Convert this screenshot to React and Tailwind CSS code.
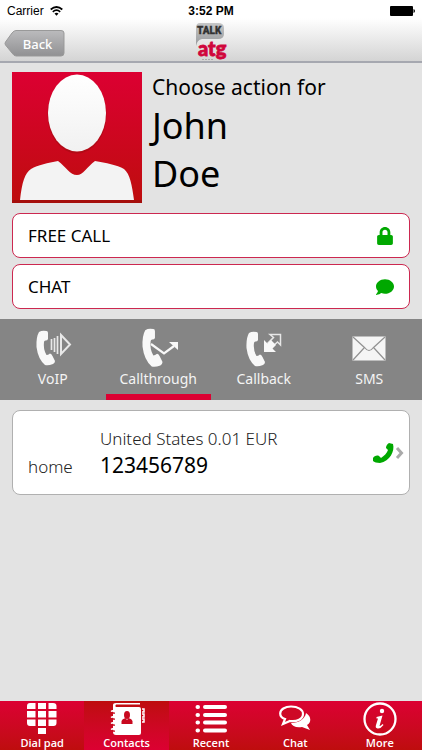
import React from 'react';
import { FaComment, FaLock } from 'react-icons/fa';

const Handset = () => (
  <path
    d="M3 2Q6 0 10.500 1Q12 1 12 3V9Q11.500 10.500 9.500 10.500Q8 10.500 8 12Q7 19 10.500 25Q12 25 14 23.500Q15.500 23.500 16.500 26L19 31Q19 33 17 34Q12 36 9 35Q2 29 .5 17Q0 7 3 2Z"
    fill="#f8f8f8"
  />
);

function VoipIcon() {
  return (
    <svg width="38" height="37" viewBox="-2 0 38 37" aria-hidden="true">
      <Handset />
      <path d="M15.500 9V20M18.500 8V22M21.500 6V24" stroke="#e8e8e8" strokeWidth="1.700" />
      <path d="M25 5L34 14.500L25 24Z" fill="none" stroke="#e8e8e8" strokeWidth="2" />
    </svg>
  );
}

function CallthroughIcon() {
  return (
    <svg width="42" height="40" viewBox="-5 0 42 40" aria-hidden="true">
      <g transform="scale(1.08 1.1)"><Handset /></g>
      <path d="M9 16L22 25.500L32 18" fill="none" stroke="#f8f8f8" strokeWidth="2.200" />
      <path d="M27 14H36V22Z" fill="#f8f8f8" />
    </svg>
  );
}

function CallbackIcon() {
  return (
    <svg width="36" height="40" viewBox="0 0 36 40" aria-hidden="true">
      <g transform="translate(0 3)"><Handset /></g>
      <path d="M24 6.500H34.500V17L31.500 14L26 19L22 15L27.500 9.500Z" fill="#858585" stroke="#e8e8e8" strokeWidth="1.500" />
      <path d="M18 12V24H30L26.500 20.500L30 17L25 12L21.500 15.500Z" fill="#f8f8f8" />
    </svg>
  );
}

function SmsIcon() {
  return (
    <svg width="34" height="26" viewBox="0 0 34 26" aria-hidden="true">
      <rect x=".5" y="1.500" width="33" height="24" fill="#f5f5f5" />
      <path d="M1 2L13 13Q17 18 21 13L33 2M1 25L12 13M33 25L22 13" fill="none" stroke="#929292" strokeWidth="1.200" />
    </svg>
  );
}

function DialPadIcon() {
  return (
    <svg width="30" height="34" viewBox="0 0 30 34" fill="#fff" aria-hidden="true">
      <path d="M3 1H8.500V7H0V4Q0 1 3 1ZM11 1H19V7H11ZM21.500 1H26Q29.500 1 29.500 4V7H21.500Z" />
      <path d="M0 9H8.500V15.500H0ZM11 9H19V15.500H11ZM21.500 9H29.500V15.500H21.500Z" />
      <path d="M0 17.500H8.500V24H3Q0 24 0 21ZM11 17.500H19V24H11ZM21.500 17.500H29.500V21Q29.500 24 26.500 24H21.500ZM11 26H19V32H11Z" />
    </svg>
  );
}

function ContactsIcon() {
  return (
    <svg width="38" height="34" viewBox="-2 0 38 34" aria-hidden="true">
      <path d="M3 3Q3 1 6 1H30V2.500H6Q4.500 4 6 5H29Q31 5 31 7V31Q31 33 29 33H6Q3 33 3 30Z" fill="#fff" />
      <path d="M32 7H34V10H32M32 12H34V15H32M32 17H34V20H32" fill="none" stroke="#fff" strokeWidth="1.500" />
      <path d="M2 11H5M2 17H5M2 23H5M2 29H5" stroke="#c60a1c" strokeWidth="1.500" />
      <path d="M1 9.500Q3 8 5 10M1 15.500Q3 14 5 16M1 21.500Q3 20 5 22M1 27.500Q3 26 5 28" fill="none" stroke="#fff" strokeWidth="1.500" />
      <ellipse cx="17" cy="13" rx="3" ry="4" fill="#c8091f" />
      <path d="M11.500 22V19Q12 17 15.500 16L17 18L18.500 16Q22 17 22.500 19V22Z" fill="#c8091f" />
    </svg>
  );
}

function RecentIcon() {
  return (
    <svg width="32" height="30" viewBox="0 0 32 30" stroke="#fff" strokeWidth="4" strokeLinecap="round" aria-hidden="true">
      <path d="M2.500 3H3M2.500 11H3M2.500 18.500H3M2.500 26.500H3M10 3H30M10 11H30M10 18.500H30M10 26.500H30" />
    </svg>
  );
}

function ChatIcon() {
  return (
    <svg width="32" height="28" viewBox="0 0 32 28" aria-hidden="true">
      <path d="M27 8C32 11 33 17 28 20L31 25L23 22C17 23 13 21 12 18C20 18 26 14 27 8Z" fill="#fff" />
      <path d="M12 1.500C19 1.500 24 4.500 24 9C24 14 18 17 11 16L4 19L6 14C3 13 1.200 11 1.200 8.500C1.200 4.500 6 1.500 12 1.500Z" fill="#ce0826" stroke="#fff" strokeWidth="2.200" />
    </svg>
  );
}

function MoreIcon() {
  return (
    <svg width="34" height="34" viewBox="0 0 34 34" aria-hidden="true">
      <circle cx="17" cy="17" r="15.500" fill="none" stroke="#fff" strokeWidth="2.300" />
      <circle cx="19" cy="9" r="2.200" fill="#fff" />
      <path d="M13.500 15L19.500 13.500L16.500 24Q17.500 24.500 19.500 22L20.500 23Q17.500 27 14.500 26.500Q12 26 13 23L15 16.500H13.500Z" fill="#fff" />
    </svg>
  );
}

function Logo() {
  return (
    <svg width="36" height="40" viewBox="0 0 36 40" role="img" aria-label="Talk atg">
      <defs>
        <linearGradient id="bubble" x1="0" y1="0" x2="0" y2="1">
          <stop offset="0" stopColor="#c6c7c8" />
          <stop offset="1" stopColor="#97999b" />
        </linearGradient>
      </defs>
      <path d="M7 1H25Q31 1 31 6V12Q31 17 25 17H9Q4 18 3 24V6Q3 1 7 1Z" fill="url(#bubble)" />
      <text x="4" y="12" fill="#333" stroke="#333" strokeWidth=".3" fontFamily="Roboto, sans-serif" fontSize="10" fontWeight="900">TALK</text>
      <text x="5" y="34" fill="#d0063c" stroke="#d0063c" strokeWidth=".8" fontFamily="Lato, sans-serif" fontSize="20" fontWeight="900">atg</text>
      <path d="M9 37.500H20" stroke="#aaa" strokeDasharray="2 1" />
    </svg>
  );
}

function Avatar() {
  return (
    <svg className="shrink-0" width="130" height="131" viewBox="0 0 130 131" role="img" aria-label="Contact photo">
      <defs>
        <linearGradient id="avatarBg" x1="0" y1="0" x2="0" y2="1">
          <stop offset="0" stopColor="#dc0032" />
          <stop offset="1" stopColor="#be0d0d" />
        </linearGradient>
        <linearGradient id="avatarFg" x1="0" y1="0" x2="0" y2="1">
          <stop offset="0" stopColor="#fff" />
          <stop offset="1" stopColor="#f1f1f1" />
        </linearGradient>
      </defs>
      <path d="M0 0H130V131H0Z" fill="url(#avatarBg)" />
      <path d="M0 128H130V131H0Z" fill="#a50e0c" />
      <ellipse cx="65" cy="42.500" rx="29.500" ry="39" fill="#9c0c10" opacity=".5" />
      <ellipse cx="65" cy="41" rx="29" ry="38.500" fill="url(#avatarFg)" />
      <path d="M8 128C10 110 13 101 19 97C26 93 36 91 46 89C54 95 58 103 65 103C71 103 75 95 83 89C94 91 105 93 112 97C118 102 120 113 122 128Z" fill="#f3f3f3" />
    </svg>
  );
}

const quickActions = [
  { label: 'FREE CALL', Icon: FaLock },
  { label: 'CHAT', Icon: FaComment },
];

const callModes = [
  { label: 'VoIP', Icon: VoipIcon },
  { label: 'Callthrough', Icon: CallthroughIcon },
  { label: 'Callback', Icon: CallbackIcon },
  { label: 'SMS', Icon: SmsIcon },
];

const navItems = [
  { label: 'Dial pad', Icon: DialPadIcon },
  { label: 'Contacts', Icon: ContactsIcon },
  { label: 'Recent', Icon: RecentIcon },
  { label: 'Chat', Icon: ChatIcon },
  { label: 'More', Icon: MoreIcon },
];

function Header() {
  return (
    <header className="border-b-2 border-[#a6a8b0] bg-linear-to-b from-white from-30% to-[#d4d4d4]">
      <div className="grid h-[22px] grid-cols-3 items-center px-[7px] font-['Liberation_Sans',sans-serif] text-xs text-black">
        <div className="flex items-center gap-1.5">
          Carrier
          <svg width="13" height="10" viewBox="0 0 13 10" fill="none" stroke="#000" strokeWidth="1.700" aria-hidden="true">
            <path d="M.7 3.500Q6.500 -1.500 12.300 3.500M2.800 5.800Q6.500 2.500 10.200 5.800" />
            <path d="M4.500 7.500Q6.500 6 8.500 7.500L6.500 9.700Z" fill="#000" stroke="none" />
          </svg>
        </div>
        <div className="text-center font-bold">3:52 PM</div>
        <svg className="justify-self-end" width="25" height="10" viewBox="0 0 25 10" aria-hidden="true">
          <rect width="23" height="10" rx="1" />
          <path d="M23.500 3Q25 3.500 25 5Q25 6.500 23.500 7Z" />
        </svg>
      </div>
      <div className="grid h-[39px] grid-cols-3 items-center px-1">
        <button type="button" className="relative mt-0.5 h-[27px] w-[61px] justify-self-start pt-0.5 pl-[6px] text-[13px] leading-5 font-medium text-white">
          <svg className="absolute inset-0" width="61" height="27" viewBox="0 0 61 27" aria-hidden="true">
            <defs>
              <linearGradient id="backBg" x1="0" y1="0" x2="0" y2="1">
                <stop offset="0" stopColor="#bbbbbd" />
                <stop offset="1" stopColor="#919193" />
              </linearGradient>
            </defs>
            <path d="M12 .5H57Q60 .5 60 3V23Q60 26 57 26H12Q10 26 8 23L1.500 15Q.5 13.500 1.500 12L8 3Q10 .5 12 .5Z" fill="url(#backBg)" stroke="#999" />
          </svg>
          <span className="relative">Back</span>
        </button>
        <div className="justify-self-center"><Logo /></div>
      </div>
    </header>
  );
}

export default function App() {
  const [mode, setMode] = React.useState('Callthrough');
  const [page, setPage] = React.useState('Contacts');

  return (
    <div className="flex min-h-screen flex-col bg-[#e3e3e3] font-['Noto_Sans',sans-serif] text-black">
      <Header />

      <main className="flex-1">
        <section className="flex gap-2.5 px-3 pt-[9px]">
          <Avatar />
          <div>
            <p className="text-[21px] leading-[30px]">Choose action for</p>
            <h1 className="text-4xl leading-12">John<br />Doe</h1>
          </div>
        </section>

        <section className="mt-2.5 flex flex-col gap-1.5 px-3">
          {quickActions.map(({ label, Icon }) => (
            <button
              key={label}
              type="button"
              className="flex h-[45px] items-center justify-between rounded-lg border border-[#cc2850] bg-white px-[15px] text-[17px]"
            >
              {label}
              <Icon className="h-[18px] w-[18px] text-[#00a800]" />
            </button>
          ))}
        </section>

        <div className="mt-2.5 grid h-[81px] grid-cols-4 bg-[#858585]" role="tablist">
          {callModes.map(({ label, Icon }) => (
            <button
              key={label}
              type="button"
              role="tab"
              aria-selected={mode === label}
              onClick={() => setMode(label)}
              className={`flex flex-col items-center border-b-[6px] pt-2 text-sm leading-5 text-[#f4f4f4] ${
                mode === label ? 'border-[#dc0032]' : 'border-transparent'
              }`}
            >
              <span className="flex h-[42px] items-center"><Icon /></span>
              {label}
            </button>
          ))}
        </div>

        <section className="px-3 pt-2.5">
          <button
            type="button"
            className="flex h-[85px] w-full items-center rounded-lg border border-[#b0b0b0] bg-white pr-1 pl-[15px] text-left"
          >
            <span className="w-18 pt-[29px] text-[17px] leading-6 font-light text-[#222]">home</span>
            <span className="flex-1">
              <span className="block text-[17px] leading-6 font-light text-[#222]">United States 0.01 EUR</span>
              <span className="block text-[21px] leading-7">123456789</span>
            </span>
            <svg width="32" height="22" viewBox="0 0 32 22" aria-hidden="true">
              <path d="M16 1L20 2C22 9 17 19 7 21C4 21 1 20 0 19V16C1 14 4 13 6 14L8 16C11 14 14 11 15 8L13 6C13 4 14 2 16 1Z" fill="#00a800" />
              <path d="M24 6L28.500 11L24 16" fill="none" stroke="#aaa" strokeWidth="3" />
            </svg>
          </button>
        </section>
      </main>

      <nav className="grid h-[49px] grid-cols-5 font-['Open_Sans',sans-serif]">
        {navItems.map(({ label, Icon }) => (
          <button
            key={label}
            type="button"
            onClick={() => setPage(label)}
            className={`flex flex-col items-center text-[11px] leading-[13px] font-semibold text-white ${
              page === label
                ? 'bg-linear-to-b from-[#be0d0d] to-[#dc0032]'
                : 'bg-linear-to-b from-[#dc0032] to-[#be0d0d]'
            }`}
          >
            <span className="flex h-[35px] items-center pt-px"><Icon /></span>
            {label}
          </button>
        ))}
      </nav>
    </div>
  );
}
